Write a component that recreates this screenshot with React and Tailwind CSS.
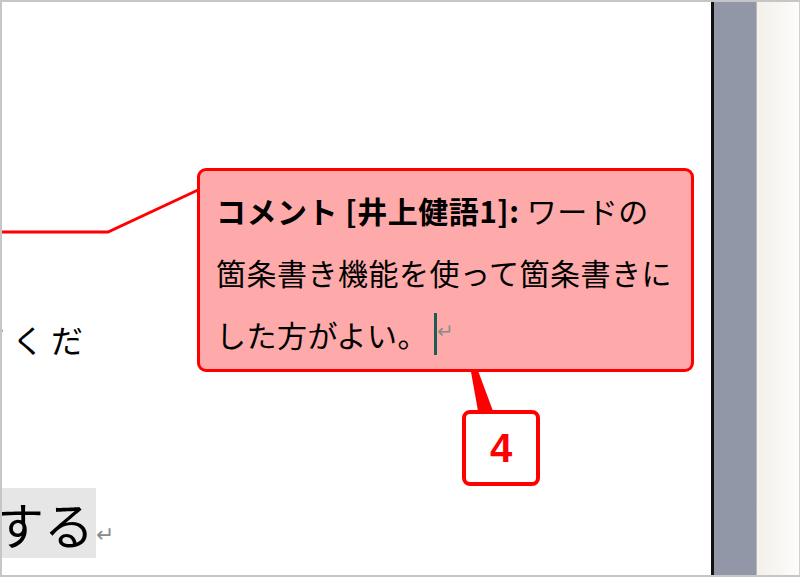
export default function App() {
  const jp = { fontFamily: '"MS Gothic","Noto Sans CJK JP","Noto Sans",sans-serif' };
  return (
    <div className="w-[800px] h-[577px] flex border-t-2 border-b-2 border-l-2 border-[#c6c6c6] bg-white overflow-hidden">
      <div className="relative w-[709px] h-full bg-white overflow-hidden">
        <div className="pt-[306px] -ml-[28px] text-[32px] leading-[62px] tracking-[7px] text-black whitespace-nowrap" style={jp}>
          てくだ
        </div>
        <div className="mt-[118px] -ml-[14px] flex items-center whitespace-nowrap" style={jp}>
          <span className="bg-[#e6e6e6] text-[50px] leading-[70px] text-black pl-[6px] pr-[2px]">する</span>
          <span className="text-[#8a8a8a] text-[22px] leading-none mt-[18px]">↵</span>
        </div>

        <svg className="absolute left-0 top-0" width="709" height="573" viewBox="0 0 709 573">
          <polyline points="0,230 106,230 196,188" fill="none" stroke="#ff0000" strokeWidth="3" />
          <polygon points="462,331 476,409 491,409" fill="#ff0000" />
        </svg>

        <div className="absolute left-[195px] top-[166px] w-[497px] h-[204px] rounded-[9px] border-[3px] border-[#ff0000] bg-[#ffaaaa] pl-[16px] pt-[8px] text-[30px] leading-[62px] tracking-[0.5px] text-black" style={jp}>
          <div className="whitespace-nowrap">
            <span className="font-bold">コメント [井上健語1]:</span> ワードの
          </div>
          <div className="whitespace-nowrap">箇条書き機能を使って箇条書きに</div>
          <div className="whitespace-nowrap flex items-center">
            <span>した方がよい。</span>
            <span className="inline-block w-[3px] h-[42px] bg-[#1d5c52] ml-[6px]"></span>
            <span className="text-[#8a8a8a] text-[20px] leading-none -mt-[8px]">↵</span>
          </div>
        </div>

        <div className="absolute left-[460px] top-[408px] w-[78px] h-[76px] rounded-[8px] border-[4px] border-[#ff0000] bg-white flex items-center justify-center">
          <span className="text-[40px] font-bold text-[#ff0000] leading-none" style={{ fontFamily: '"Liberation Sans",Arial,sans-serif' }}>4</span>
        </div>
      </div>
      <div className="w-[3px] h-full bg-[#111111]"></div>
      <div className="w-[43px] h-full bg-[#9297a8] border-r border-[#b8b8b8]"></div>
      <div className="flex-1 h-full bg-gradient-to-r from-[#f3f0ea] to-[#fdfcfa] border-r border-[#d0d0d0]"></div>
    </div>
  );
}
